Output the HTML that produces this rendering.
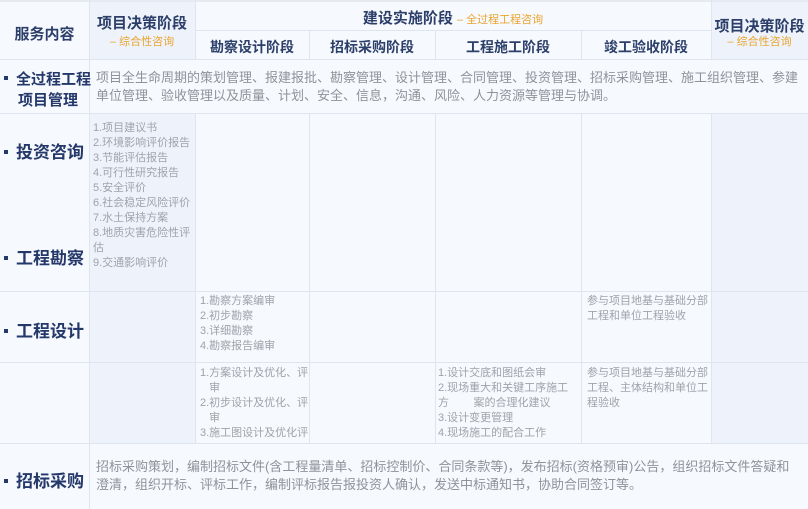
<!DOCTYPE html>
<html><head><meta charset="utf-8"><style>
*{margin:0;padding:0;box-sizing:border-box}
body{width:808px;height:509px;background:#f6f9fd;font-family:"Liberation Sans","Noto Sans CJK SC",sans-serif;position:relative;overflow:hidden}
.a{position:absolute}
.shade{background:#eef3fb}
.hl{position:absolute;height:1px;background:#dfe5ee}
.vl{position:absolute;width:1px;background:#dfe5ee}
.h{color:#2c3f6a;font-weight:bold;font-size:14px;text-align:center}
.sub{color:#e9a42f;font-size:11px;text-align:center}
.lab{color:#24386a;font-weight:bold;font-size:17px}
.lab b{display:inline-block;width:4px;height:4px;background:#24386a;vertical-align:middle;margin-right:8px;position:relative;top:-2px}
.txt{color:#8e939b;font-size:13px;line-height:18px}
.li{color:#9fa3ab;font-size:11px;line-height:15px;white-space:nowrap}
</style></head><body>
<div class="a shade" style="left:89px;top:0;width:106px;height:509px"></div>
<div class="a shade" style="left:711px;top:0;width:97px;height:509px"></div>
<div class="a" style="left:0;top:59px;width:808px;height:54px;background:#f6f9fd"></div>
<div class="a" style="left:0;top:443px;width:808px;height:66px;background:#f6f9fd"></div>
<div class="a" style="left:0;top:0;width:808px;height:2px;background:#e6ebf2"></div>
<div class="hl" style="left:195px;top:30px;width:516px"></div>
<div class="hl" style="left:0;top:59px;width:808px"></div>
<div class="hl" style="left:0;top:113px;width:808px"></div>
<div class="hl" style="left:0;top:291px;width:808px"></div>
<div class="hl" style="left:0;top:362px;width:808px"></div>
<div class="hl" style="left:0;top:443px;width:808px"></div>
<div class="vl" style="left:89px;top:0;height:509px"></div>
<div class="vl" style="left:195px;top:0;height:59px"></div>
<div class="vl" style="left:195px;top:113px;height:330px"></div>
<div class="vl" style="left:711px;top:0;height:59px"></div>
<div class="vl" style="left:711px;top:113px;height:330px"></div>
<div class="vl" style="left:309px;top:30px;height:29px"></div>
<div class="vl" style="left:309px;top:113px;height:330px"></div>
<div class="vl" style="left:435px;top:30px;height:29px"></div>
<div class="vl" style="left:435px;top:113px;height:330px"></div>
<div class="vl" style="left:581px;top:30px;height:29px"></div>
<div class="vl" style="left:581px;top:113px;height:330px"></div>

<div class="a h" style="left:0;top:23px;width:89px;font-size:15px">服务内容</div>
<div class="a h" style="left:89px;top:12px;width:106px;font-size:15px">项目决策阶段</div>
<div class="a sub" style="left:89px;top:33px;width:106px">– 综合性咨询</div>
<div class="a h" style="left:195px;top:7px;width:516px;font-size:15px">建设实施阶段 <span class="sub" style="font-weight:normal">– 全过程工程咨询</span></div>
<div class="a h" style="left:195px;top:37px;width:114px">勘察设计阶段</div>
<div class="a h" style="left:309px;top:37px;width:126px">招标采购阶段</div>
<div class="a h" style="left:435px;top:37px;width:146px">工程施工阶段</div>
<div class="a h" style="left:581px;top:37px;width:130px">竣工验收阶段</div>
<div class="a h" style="left:711px;top:15px;width:97px;font-size:15px">项目决策阶段</div>
<div class="a sub" style="left:711px;top:33px;width:97px">– 综合性咨询</div>

<div class="a lab" style="left:4px;top:69px;line-height:21px;font-size:15px"><b></b>全过程工程<br><span style="margin-left:14px">项目管理</span></div>
<div class="a txt" style="left:96px;top:69px;width:710px">项目全生命周期的策划管理、报建报批、勘察管理、设计管理、合同管理、投资管理、招标采购管理、施工组织管理、参建单位管理、验收管理以及质量、计划、安全、信息，沟通、风险、人力资源等管理与协调。</div>

<div class="a lab" style="left:4px;top:138px"><b></b>投资咨询</div>
<div class="a lab" style="left:4px;top:244px"><b></b>工程勘察</div>
<div class="a li" style="left:93px;top:121px">1.项目建议书<br>2.环境影响评价报告<br>3.节能评估报告<br>4.可行性研究报告<br>5.安全评价<br>6.社会稳定风险评价<br>7.水土保持方案<br>8.地质灾害危险性评<br>估<br>9.交通影响评价</div>

<div class="a lab" style="left:4px;top:317px"><b></b>工程设计</div>
<div class="a li" style="left:200px;top:294px">1.勘察方案编审<br>2.初步勘察<br>3.详细勘察<br>4.勘察报告编审</div>
<div class="a li" style="left:587px;top:294px">参与项目地基与基础分部<br>工程和单位工程验收</div>

<div class="a li" style="left:200px;top:366px">1.方案设计及优化、评<br>&nbsp;&nbsp;&nbsp;审<br>2.初步设计及优化、评<br>&nbsp;&nbsp;&nbsp;审<br>3.施工图设计及优化评</div>
<div class="a li" style="left:438px;top:366px">1.设计交底和图纸会审<br>2.现场重大和关键工序施工<br>方&nbsp;&nbsp;&nbsp;&nbsp;&nbsp;&nbsp;&nbsp;&nbsp;案的合理化建议<br>3.设计变更管理<br>4.现场施工的配合工作</div>
<div class="a li" style="left:587px;top:366px">参与项目地基与基础分部<br>工程、主体结构和单位工<br>程验收</div>

<div class="a lab" style="left:4px;top:467px"><b></b>招标采购</div>
<div class="a txt" style="left:96px;top:458px;width:705px">招标采购策划，编制招标文件(含工程量清单、招标控制价、合同条款等)，发布招标(资格预审)公告，组织招标文件答疑和澄清，组织开标、评标工作，编制评标报告报投资人确认，发送中标通知书，协助合同签订等。</div>
</body></html>
